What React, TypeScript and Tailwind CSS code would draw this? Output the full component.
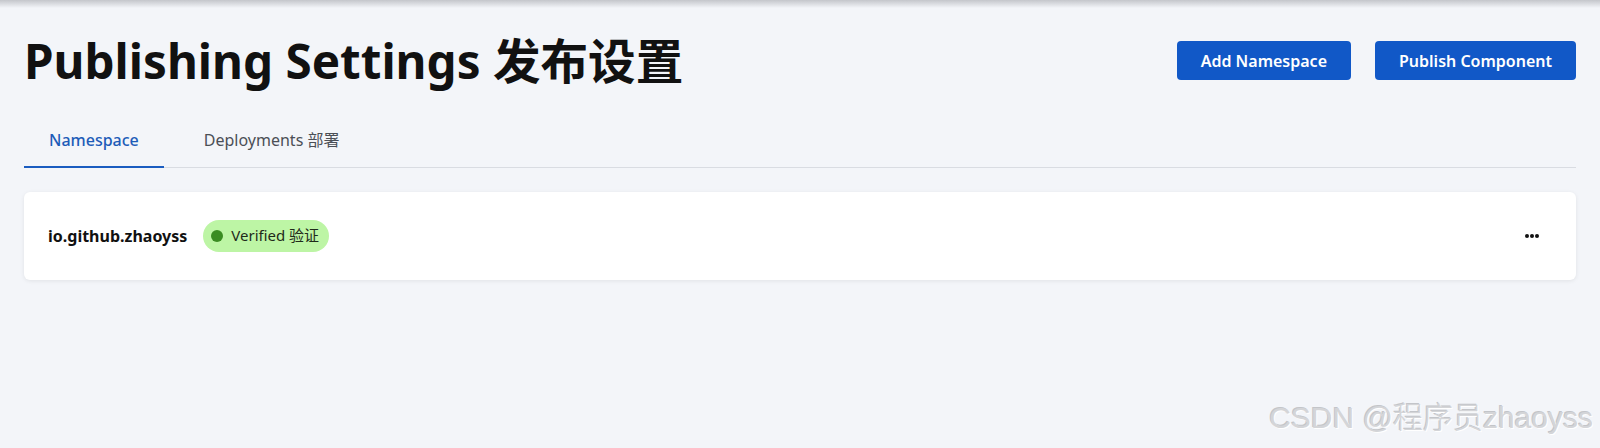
import React from 'react';

const font = { fontFamily: '"Noto Sans", "Noto Sans CJK SC", sans-serif' };

const App: React.FC = () => {
  return (
    <div className="relative min-h-[448px] w-full overflow-hidden bg-[#f3f5f9]" style={font}>
      <div className="h-2 bg-gradient-to-b from-[#c4c6cb] to-[#f3f5f9]"></div>

      <div className="px-6">
        <div className="flex items-center justify-between pt-[29px]">
          <h1 className="text-[47.6px] font-bold leading-none text-[#111111]">Publishing Settings 发布设置</h1>
          <div className="flex gap-6">
            <button className="h-[39px] rounded-[4px] bg-[#1158c7] px-6 text-base font-semibold text-white">
              Add Namespace
            </button>
            <button className="h-[39px] rounded-[4px] bg-[#1158c7] px-6 text-base font-semibold text-white">
              Publish Component
            </button>
          </div>
        </div>

        <div className="mt-[32px] flex border-b border-[#d9dce2]">
          <button className="-mb-px border-b-2 border-[#1a5cc0] px-[25px] pt-[11px] pb-[14px] text-base font-medium text-[#1d5cb8]">
            Namespace
          </button>
          <button className="-mb-px border-b-2 border-transparent px-10 pt-[11px] pb-[14px] text-base text-[#4b4f56]">
            Deployments 部署
          </button>
        </div>

        <div className="mt-6 flex h-[88px] items-center justify-between rounded-md bg-white px-6 shadow-[0_1px_4px_rgba(0,0,0,0.08)]">
          <div className="flex items-center gap-4">
            <span className="text-base font-bold text-[#111111]">io.github.zhaoyss</span>
            <span className="flex h-8 items-center gap-2 rounded-full bg-[#bdf5a5] pl-2 pr-[10px] text-[15px] text-[#1f2a1a]">
              <span className="h-3 w-3 rounded-full bg-[#3a8c22]"></span>
              Verified 验证
            </span>
          </div>
          <button className="mr-[8px] flex h-6 w-6 items-center justify-center text-[#111111]">
            <svg width="14" height="4" viewBox="0 0 14 4" fill="currentColor">
              <circle cx="2" cy="2" r="2" />
              <circle cx="7" cy="2" r="2" />
              <circle cx="12" cy="2" r="2" />
            </svg>
          </button>
        </div>
      </div>

      <div
        className="absolute right-[7px] bottom-[8px] text-[30px] font-light text-[#d4d5d8] [text-shadow:1px_1px_0_#ffffff,-1px_-1px_0_#c3c5c9]"
        style={{ fontFamily: '"Liberation Sans", "Noto Sans CJK SC", sans-serif' }}
      >
        CSDN @程序员zhaoyss
      </div>
    </div>
  );
};

export default App;
